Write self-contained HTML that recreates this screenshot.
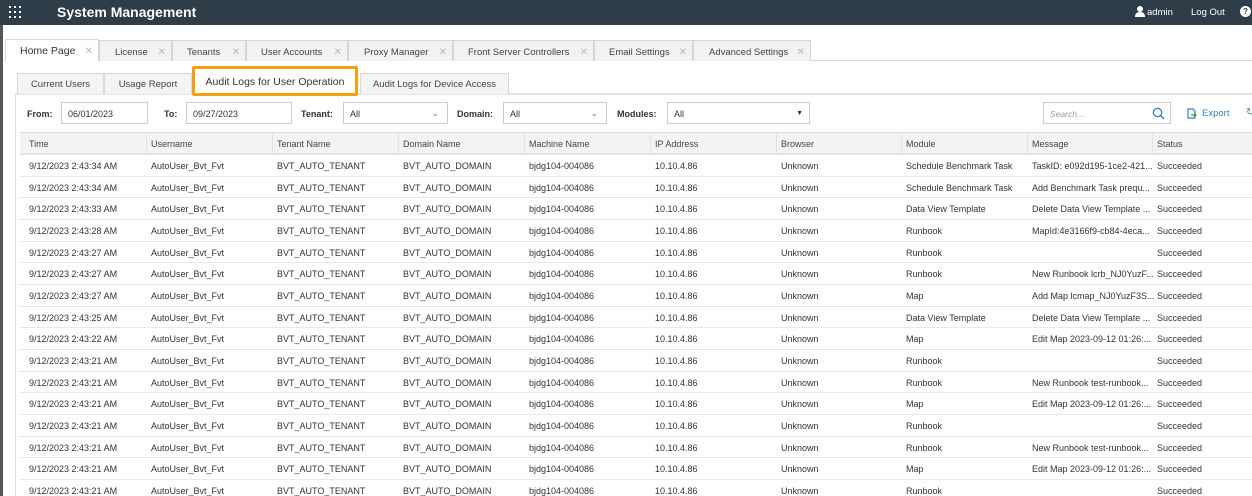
<!DOCTYPE html>
<html><head><meta charset="utf-8"><style>
*{box-sizing:border-box;margin:0;padding:0}
html,body{width:1252px;height:496px;overflow:hidden}
body{background:#fff;font-family:"Liberation Sans",sans-serif;font-size:9px;color:#333;position:relative}
.a{position:absolute}
.hdr{left:0;top:0;width:1252px;height:25px;background:#2e3d48;color:#fff}
.tab{position:absolute;top:40px;height:21px;background:#f2f2f2;border:1px solid #d6d6d6;border-bottom:none;font-size:9.5px;color:#444;padding:6px 0 0 0}
.tab span.x{position:absolute;right:5px;top:6px;color:#bbb;font-size:10px}
.st{position:absolute;top:73px;height:21px;background:#f4f4f4;border:1px solid #d8d8d8;border-bottom:none;font-size:9.5px;color:#444;text-align:center;padding-top:5px}
.inp{position:absolute;top:102px;height:22px;border:1px solid #ccc;background:#fff;font-size:9px;padding:6px 0 0 6px;color:#333}
.lbl{position:absolute;top:109px;font-weight:bold;font-size:9px;color:#333}
.row{position:absolute;left:20px;width:1232px;height:21.67px;border-bottom:1px solid #e8e8e8}
.row div,.th div{position:absolute;top:6px;white-space:nowrap;font-size:9px}
.th{position:absolute;left:20px;top:132px;width:1232px;height:23px;background:#f3f3f3;border-bottom:2px solid #e3e3e3;border-top:1px solid #ddd}
.th div{color:#444}
.th i{position:absolute;top:0;height:21px;border-left:1px solid #e2e2e2}
</style></head><body>
<div class="a hdr">
 <div class="a" style="left:9px;top:6px;width:12px;height:12px">
  <svg width="12" height="12"><g fill="#fff"><rect x="0" y="0" width="2" height="2"/><rect x="5" y="0" width="2" height="2"/><rect x="10" y="0" width="2" height="2"/><rect x="0" y="5" width="2" height="2"/><rect x="5" y="5" width="2" height="2"/><rect x="10" y="5" width="2" height="2"/><rect x="0" y="10" width="2" height="2"/><rect x="5" y="10" width="2" height="2"/><rect x="10" y="10" width="2" height="2"/></g></svg>
 </div>
 <div class="a" style="left:57px;top:4px;font-size:14px;font-weight:bold">System Management</div>
 <svg class="a" style="left:1135px;top:6px" width="10" height="11"><circle cx="5" cy="3" r="3" fill="#fff"/><path d="M0 11 Q0 6 5 6 Q10 6 10 11Z" fill="#fff"/></svg>
 <div class="a" style="left:1147px;top:7px;font-size:9.5px">admin</div>
 <div class="a" style="left:1191px;top:7px;font-size:9.5px">Log Out</div>
 <div class="a" style="left:1240px;top:6px;width:11px;height:11px;border-radius:50%;background:#fff;color:#2e3d48;font-size:8px;font-weight:bold;text-align:center;line-height:11px">?</div>
</div>
<div class="a" style="left:0;top:25px;width:3px;height:471px;background:#555"></div>
<div class="a" style="left:4px;top:60px;width:1248px;height:1px;background:#d6d6d6"></div>
<div class="tab" style="left:5px;width:94px;background:#fff;top:39px;height:22px;font-size:10.5px;color:#333;padding-left:14px;padding-top:5px">Home Page<span class="x">✕</span></div>
<div class="tab" style="left:99px;width:73px;padding-left:15px">License<span class="x">✕</span></div>
<div class="tab" style="left:172px;width:74px;padding-left:14px">Tenants<span class="x">✕</span></div>
<div class="tab" style="left:246px;width:102px;padding-left:14px">User Accounts<span class="x">✕</span></div>
<div class="tab" style="left:348px;width:105px;padding-left:15px">Proxy Manager<span class="x">✕</span></div>
<div class="tab" style="left:453px;width:141px;padding-left:14px">Front Server Controllers<span class="x">✕</span></div>
<div class="tab" style="left:594px;width:99px;padding-left:14px">Email Settings<span class="x">✕</span></div>
<div class="tab" style="left:693px;width:118px;padding-left:15px">Advanced Settings<span class="x">✕</span></div>
<div class="a" style="left:15px;top:93px;width:1237px;height:2px;background:#e2e2e2"></div>
<div class="a" style="left:15px;top:93px;width:1px;height:403px;background:#ddd"></div>
<div class="st" style="left:17px;width:87px">Current Users</div>
<div class="st" style="left:104px;width:88px">Usage Report</div>
<div class="st" style="left:360px;width:149px">Audit Logs for Device Access</div>
<div class="a" style="left:192px;top:66px;width:166px;height:30px;border:3px solid #f5a00f;border-radius:2px;background:#fff;font-size:10.5px;color:#333;text-align:center;padding-top:7px">Audit Logs for User Operation</div>
<div class="lbl" style="left:27px">From:</div>
<div class="inp" style="left:61px;width:87px">06/01/2023</div>
<div class="lbl" style="left:164px">To:</div>
<div class="inp" style="left:186px;width:106px">09/27/2023</div>
<div class="lbl" style="left:301px">Tenant:</div>
<div class="inp" style="left:343px;width:105px">All<span class="a" style="right:8px;top:5px;color:#777">⌄</span></div>
<div class="lbl" style="left:457px">Domain:</div>
<div class="inp" style="left:503px;width:104px">All<span class="a" style="right:8px;top:5px;color:#777">⌄</span></div>
<div class="lbl" style="left:617px">Modules:</div>
<div class="inp" style="left:667px;width:143px">All<span class="a" style="right:6px;top:7px;font-size:7px">▼</span></div>
<div class="inp" style="left:1043px;width:128px;padding-top:6px;color:#999;font-style:italic;font-size:8.5px">Search...
 <svg class="a" style="right:5px;top:4px" width="13" height="13"><circle cx="5.5" cy="5.5" r="4.2" fill="none" stroke="#3a7ebf" stroke-width="1.3"/><path d="M8.5 8.5L12 12" stroke="#3a7ebf" stroke-width="1.5"/></svg>
</div>
<svg class="a" style="left:1187px;top:108px" width="10" height="11"><path d="M1 1H6L8 3V10H1Z" fill="none" stroke="#3a7ebf" stroke-width="1.2"/><path d="M4 7H9M7 5L9 7L7 9" stroke="#2a9a3a" stroke-width="1.2" fill="none"/></svg>
<div class="a" style="left:1202px;top:108px;font-size:9.5px;color:#3a7ebf">Export</div>
<div class="a" style="left:1246px;top:107px;font-size:10px;color:#3a9a5a">↻</div>
<div class="th">
<div style="left:9px">Time</div><i style="left:126px"></i>
<div style="left:131px">Username</div><i style="left:252px"></i>
<div style="left:257px">Tenant Name</div><i style="left:378px"></i>
<div style="left:383px">Domain Name</div><i style="left:504px"></i>
<div style="left:509px">Machine Name</div><i style="left:630px"></i>
<div style="left:635px">IP Address</div><i style="left:756px"></i>
<div style="left:761px">Browser</div><i style="left:881px"></i>
<div style="left:886px">Module</div><i style="left:1007px"></i>
<div style="left:1012px">Message</div><i style="left:1132px"></i>
<div style="left:1137px">Status</div>
</div>
<div id="rows"></div>
<script>
var d=[["9/12/2023 2:43:34 AM","Schedule Benchmark Task","TaskID: e092d195-1ce2-421..."],
["9/12/2023 2:43:34 AM","Schedule Benchmark Task","Add Benchmark Task prequ..."],
["9/12/2023 2:43:33 AM","Data View Template","Delete Data View Template ..."],
["9/12/2023 2:43:28 AM","Runbook","MapId:4e3166f9-cb84-4eca..."],
["9/12/2023 2:43:27 AM","Runbook",""],
["9/12/2023 2:43:27 AM","Runbook","New Runbook lcrb_NJ0YuzF..."],
["9/12/2023 2:43:27 AM","Map","Add Map lcmap_NJ0YuzF3S..."],
["9/12/2023 2:43:25 AM","Data View Template","Delete Data View Template ..."],
["9/12/2023 2:43:22 AM","Map","Edit Map 2023-09-12 01:26:..."],
["9/12/2023 2:43:21 AM","Runbook",""],
["9/12/2023 2:43:21 AM","Runbook","New Runbook test-runbook..."],
["9/12/2023 2:43:21 AM","Map","Edit Map 2023-09-12 01:26:..."],
["9/12/2023 2:43:21 AM","Runbook",""],
["9/12/2023 2:43:21 AM","Runbook","New Runbook test-runbook..."],
["9/12/2023 2:43:21 AM","Map","Edit Map 2023-09-12 01:26:..."],
["9/12/2023 2:43:21 AM","Runbook",""]];
var h="";
d.forEach(function(r,i){h+='<div class="row" style="top:'+(155+i*21.67).toFixed(2)+'px"><div style="left:9px">'+r[0]+'</div><div style="left:131px">AutoUser_Bvt_Fvt</div><div style="left:257px">BVT_AUTO_TENANT</div><div style="left:383px">BVT_AUTO_DOMAIN</div><div style="left:509px">bjdg104-004086</div><div style="left:635px">10.10.4.86</div><div style="left:761px">Unknown</div><div style="left:886px">'+r[1]+'</div><div style="left:1012px">'+r[2]+'</div><div style="left:1137px">Succeeded</div></div>'});
document.getElementById("rows").innerHTML=h;
</script>
</body></html>
